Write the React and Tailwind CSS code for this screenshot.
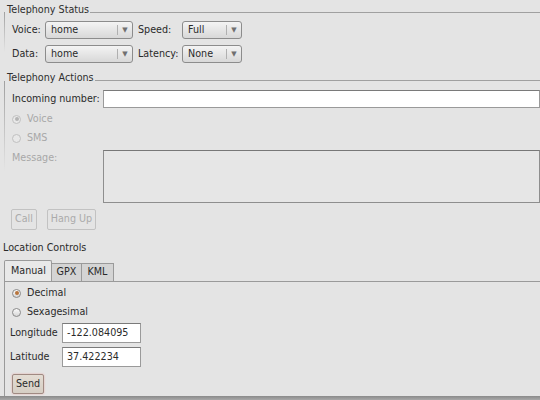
import React from 'react';

const font = { fontFamily: '"DejaVu Sans", "Liberation Sans", sans-serif' };

function Legend({ text, className = '' }) {
  return (
    <div className={"flex items-center h-[12px] " + className}>
      <span className="pl-[7px] pr-[1px] leading-[12px] text-[#2e2e2e]">{text}</span>
      <div className="flex-1 h-px bg-[#a0a0a0] mt-[4px]" />
    </div>
  );
}

function Combo({ value, width }) {
  return (
    <div className={"flex items-center h-[18px] rounded-[3px] border border-[#8c8c8c] bg-gradient-to-b from-[#f4f4f4] to-[#d8d8d8] " + width}>
      <span className="flex-1 pl-[5px] text-[#2a2a2a]">{value}</span>
      <div className="w-px h-[10px] bg-[#b0b0b0]" />
      <span className="w-[14px] text-center text-[7px] text-[#707070]">▼</span>
    </div>
  );
}

function Radio({ checked, disabled, label }) {
  return (
    <div className="flex items-center h-[14px]">
      <div
        className={
          "w-[9px] h-[9px] rounded-full border flex items-center justify-center " +
          (disabled ? 'border-[#c0c0c0] bg-[#e8e8e8]' : 'border-[#8a8a8a] bg-gradient-to-b from-[#fafafa] to-[#d6d6d6]')
        }
      >
        {checked && (
          <div className={"w-[4px] h-[4px] rounded-full " + (disabled ? 'bg-[#b4b4b4]' : 'bg-[#b8743c]')} />
        )}
      </div>
      <span className={"ml-[6px] " + (disabled ? 'text-[#a8a8a8]' : 'text-[#2a2a2a]')}>{label}</span>
    </div>
  );
}

export default function App() {
  return (
    <div className="relative w-[540px] h-[400px] overflow-hidden bg-[#e4e4e4] text-[9.6px] text-[#2a2a2a] flex flex-col" style={font}>
      {/* Telephony Status */}
      <div className="relative pt-[4px]">
        <div className="absolute left-[4px] top-[12px] w-px h-[40px] bg-gradient-to-b from-[#a0a0a0] to-transparent" />
        <Legend text="Telephony Status" />
        <div className="flex items-center h-[18px] mt-[5px] pl-[12px]">
          <span className="w-[33px]">Voice:</span>
          <Combo value="home" width="w-[88px]" />
          <span className="ml-[5px] w-[44px]">Speed:</span>
          <Combo value="Full" width="w-[60px]" />
        </div>
        <div className="flex items-center h-[18px] mt-[6px] pl-[12px]">
          <span className="w-[33px]">Data:</span>
          <Combo value="home" width="w-[88px]" />
          <span className="ml-[5px] w-[44px]">Latency:</span>
          <Combo value="None" width="w-[60px]" />
        </div>
      </div>

      {/* Telephony Actions */}
      <div className="relative mt-[9px]">
        <div className="absolute left-[4px] top-[9px] w-px h-[90px] bg-gradient-to-b from-[#a0a0a0] to-transparent" />
        <Legend text="Telephony Actions" />
        <div className="flex items-center h-[18px] mt-[6px] pl-[12px]">
          <span className="w-[91px]">Incoming number:</span>
          <div className="flex-1 h-[18px] bg-white border border-[#9a9a9a] border-t-[#7a7a7a]" />
        </div>
        <div className="pl-[12px] mt-[4px]">
          <Radio checked disabled label="Voice" />
        </div>
        <div className="pl-[12px] mt-[5px]">
          <Radio disabled label="SMS" />
        </div>
        <div className="flex mt-[5px] pl-[12px]">
          <span className="w-[91px] pt-[1px] text-[#a8a8a8]">Message:</span>
          <div className="flex-1 h-[53px] border border-[#8e8e8e] border-t-[#777] bg-[#e6e6e6]" />
        </div>
        <div className="flex mt-[6px] pl-[11px] gap-[10px]">
          <div className="h-[21px] w-[26px] flex items-center justify-center rounded-[2px] border border-[#c2c2c2] text-[#ababab]">Call</div>
          <div className="h-[21px] w-[49px] flex items-center justify-center rounded-[2px] border border-[#c2c2c2] text-[#ababab]">Hang Up</div>
        </div>
      </div>

      {/* Location Controls */}
      <div className="mt-[12px] h-[12px] leading-[12px] pl-[3px]">Location Controls</div>
      <div className="flex items-end h-[21px] mt-[6px] pl-[4px]">
        <div className="h-[21px] w-[48px] pl-[6px] flex items-center border border-b-0 border-[#9a9a9a] rounded-t-[2px] bg-[#e9e9e9]">Manual</div>
        <div className="h-[18px] w-[30px] flex items-center justify-center border-t border-r border-[#9a9a9a] bg-[#d4d4d4]">GPX</div>
        <div className="h-[18px] w-[32px] flex items-center justify-center border-t border-r border-[#9a9a9a] bg-[#d4d4d4]">KML</div>
      </div>
      <div className="flex-1 ml-[4px] border-l border-t border-[#9a9a9a] flex flex-col">
        <div className="pl-[7px] mt-[4px]">
          <Radio checked label="Decimal" />
        </div>
        <div className="pl-[7px] mt-[5px]">
          <Radio label="Sexagesimal" />
        </div>
        <div className="flex items-center mt-[4px] pl-[5px]">
          <span className="w-[52px]">Longitude</span>
          <div className="h-[20px] w-[79px] bg-white border border-[#9a9a9a] border-t-[#7a7a7a] flex items-center pl-[4px]">-122.084095</div>
        </div>
        <div className="flex items-center mt-[4px] pl-[5px]">
          <span className="w-[52px]">Latitude</span>
          <div className="h-[20px] w-[79px] bg-white border border-[#9a9a9a] border-t-[#7a7a7a] flex items-center pl-[4px]">37.422234</div>
        </div>
        <div className="mt-[7px] ml-[7px]">
          <div className="h-[20px] w-[32px] flex items-center justify-center rounded-[2px] border border-[#a08a82] bg-gradient-to-b from-[#e4ddd4] to-[#d6cec4] shadow-[0_0_2px_#e8a8a0]">Send</div>
        </div>
      </div>
      <div className="h-[4px] bg-gradient-to-b from-[#8a8a8a] to-[#a8a8a8]" />
    </div>
  );
}
